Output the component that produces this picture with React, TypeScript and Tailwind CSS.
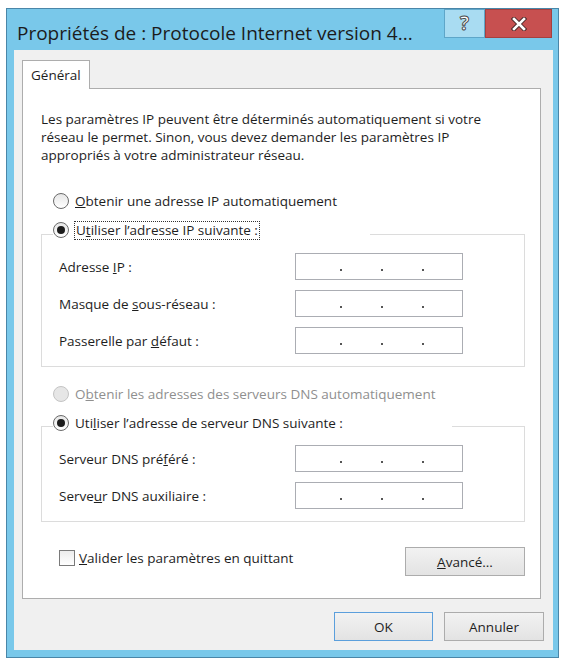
import type { ReactNode } from "react"

function Radio({ checked, disabled }: { checked?: boolean; disabled?: boolean }) {
  return (
    <span
      className={
        disabled
          ? "flex h-[16px] w-[16px] shrink-0 items-center justify-center rounded-full border border-[#c4c4c4] bg-[#e6e6e6]"
          : "flex h-[16px] w-[16px] shrink-0 items-center justify-center rounded-full border border-[#6a6a6a] bg-gradient-to-b from-[#e6e6e6] to-white"
      }
    >
      {checked && <span className="h-[8px] w-[8px] rounded-full bg-[#1c1c1c]" />}
    </span>
  )
}

function IpField() {
  return (
    <div className="flex h-[27px] w-[168px] items-start gap-[39px] border border-[#abadb3] bg-white pl-[44px] pt-[15px]">
      <span className="h-[2px] w-[2px] bg-[#555]" />
      <span className="h-[2px] w-[2px] bg-[#555]" />
      <span className="h-[2px] w-[2px] bg-[#555]" />
    </div>
  )
}

function FieldRow({ children }: { children: ReactNode }) {
  return (
    <div className="flex h-[27px] items-center">
      <span className="ml-[6px] w-[236px]">{children}</span>
      <IpField />
    </div>
  )
}

function Button({ children, primary, w }: { children: ReactNode; primary?: boolean; w: string }) {
  return (
    <div
      className={`flex h-[29px] items-center justify-center border bg-gradient-to-b from-[#f2f2f2] to-[#e3e3e3] ${
        primary ? "border-[#5b9fdc]" : "border-[#acacac]"
      } ${w}`}
    >
      {children}
    </div>
  )
}

export default function App() {
  return (
    <div className="h-[659px] w-[562px] overflow-hidden bg-white pl-[6px] pt-[8px] font-['Open_Sans','Noto_Sans',sans-serif] text-[13.5px] leading-[18px] text-[#1e1e1e]">
      <div className="flex h-[650px] w-[553px] flex-col border border-[#4a86a8] bg-[#79c8ea]">
        {/* title bar */}
        <div className="flex h-[41px] shrink-0 items-start">
          <div className="flex-1 overflow-hidden whitespace-nowrap pl-[10px] pt-[11px] text-[19px] leading-[26px] text-[#1c1c1c]">
            Propriétés de : Protocole Internet version 4...
          </div>
          <div className="mr-[6px] flex">
            <div className="flex h-[29px] w-[41px] items-center justify-center border border-[#5ea6c9] bg-[#a9dcf2]">
              <span className="text-[19px] font-bold leading-none text-white [-webkit-text-stroke:1px_#4a4a4a]">?</span>
            </div>
            <div className="flex h-[29px] w-[67px] items-center justify-center border border-[#a54040] bg-[#c75050]">
              <svg width="16" height="14" viewBox="0 0 16 14">
                <path d="M3 2 L13 12 M13 2 L3 12" stroke="#4a2a2a" strokeWidth="4.5" strokeLinecap="square" />
                <path d="M3 2 L13 12 M13 2 L3 12" stroke="#fff" strokeWidth="2.6" strokeLinecap="square" />
              </svg>
            </div>
          </div>
        </div>

        {/* client area */}
        <div className="ml-[7px] mr-[5px] flex h-[600px] shrink-0 flex-col bg-[#f0f0f0]">
          <div className="ml-[8px] mt-[10px] flex">
            <div className="relative z-10 -mb-px h-[29px] w-[68px] border border-b-0 border-[#adadad] bg-white pl-[8px] pt-[5px]">
              Général
            </div>
          </div>

          <div className="ml-[8px] flex h-[511px] w-[519px] flex-col border border-[#adadad] bg-white pl-[18px] pt-[21px]">
            <p>
              Les paramètres IP peuvent être déterminés automatiquement si votre
              <br />
              réseau le permet. Sinon, vous devez demander les paramètres IP
              <br />
              appropriés à votre administrateur réseau.
            </p>

            <div className="ml-[12px] mt-[27px] flex h-[20px] items-center gap-[6px]">
              <Radio />
              <span>
                <u>O</u>btenir une adresse IP automatiquement
              </span>
            </div>

            <fieldset className="mt-[9px] w-[484px] border border-[#dcdcdc] pb-[12px] pl-[11px]">
              <legend className="w-[317px] pb-[8px]">
                <div className="flex h-[20px] items-center gap-[5px]">
                  <Radio checked />
                  <span className="border border-dotted border-[#333] px-[1px] leading-[17px]">
                    U<u>t</u>iliser l’adresse IP suivante :
                  </span>
                </div>
              </legend>
              <div className="flex flex-col gap-[10px] pt-[5px]">
                <FieldRow>
                  Adresse <u>I</u>P :
                </FieldRow>
                <FieldRow>
                  Masque de <u>s</u>ous-réseau :
                </FieldRow>
                <FieldRow>
                  Passerelle par <u>d</u>éfaut :
                </FieldRow>
              </div>
            </fieldset>

            <div className="ml-[12px] mt-[17px] flex h-[20px] items-center gap-[6px] text-[#8f8f8f]">
              <Radio disabled />
              <span>
                O<u>b</u>tenir les adresses des serveurs DNS automatiquement
              </span>
            </div>

            <fieldset className="mt-[9px] w-[484px] border border-[#dcdcdc] pb-[12px] pl-[11px]">
              <legend className="w-[399px] pb-[6px]">
                <div className="flex h-[20px] items-center gap-[6px]">
                  <Radio checked />
                  <span>
                    Uti<u>l</u>iser l’adresse de serveur DNS suivante :
                  </span>
                </div>
              </legend>
              <div className="flex flex-col gap-[10px] pt-[6px]">
                <FieldRow>
                  Serveur DNS pré<u>f</u>éré :
                </FieldRow>
                <FieldRow>
                  Serve<u>u</u>r DNS auxiliaire :
                </FieldRow>
              </div>
            </fieldset>

            <div className="mt-[25px] flex w-[484px] items-start justify-between">
              <div className="ml-[18px] mt-[2px] flex items-center gap-[4px]">
                <span className="h-[16px] w-[16px] border border-[#7a7a7a] bg-gradient-to-b from-[#ececec] to-white" />
                <span>
                  <u>V</u>alider les paramètres en quittant
                </span>
              </div>
              <Button w="w-[120px]">
                <span>
                  <u>A</u>vancé...
                </span>
              </Button>
            </div>
          </div>

          <div className="mt-[13px] flex justify-end gap-[11px] pr-[9px]">
            <Button primary w="w-[99px]">
              OK
            </Button>
            <Button w="w-[100px]">Annuler</Button>
          </div>
        </div>
      </div>
    </div>
  )
}
